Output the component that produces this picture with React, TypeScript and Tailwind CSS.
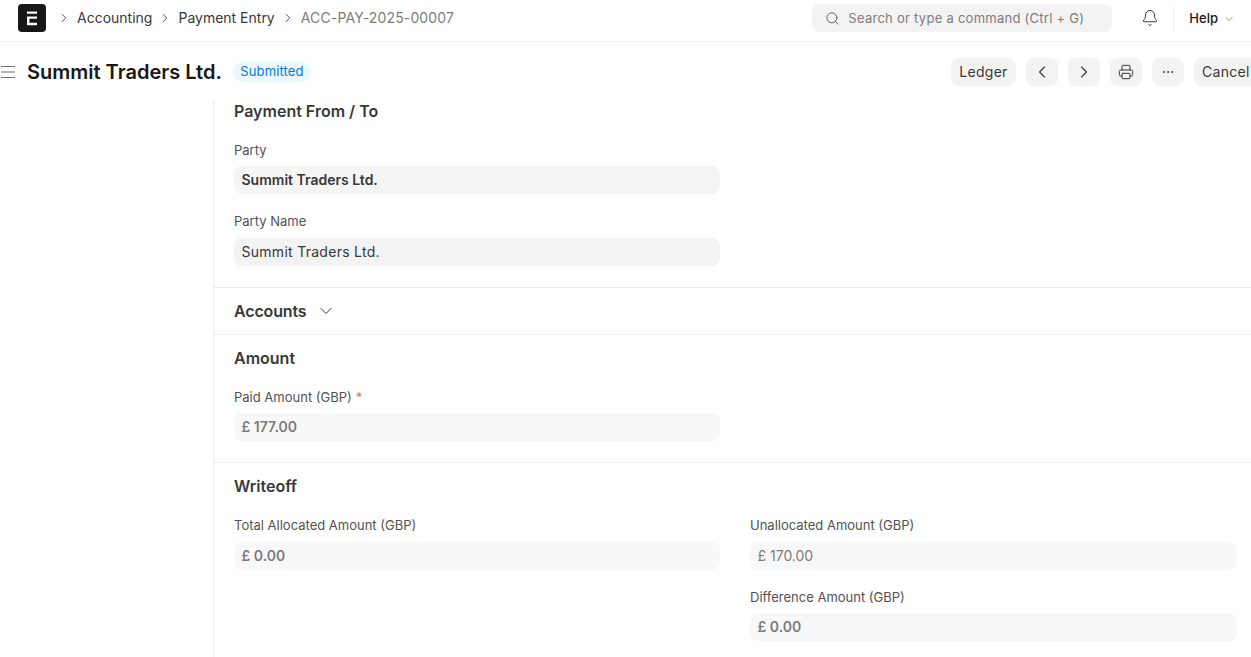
import { Bell, ChevronDown, ChevronLeft, ChevronRight, Ellipsis, Printer, Search } from "lucide-react";

const inter = "font-['Inter',sans-serif]";

function Crumb({ label, muted }: { label: string; muted?: boolean }) {
  return (
    <>
      <ChevronRight size={14} strokeWidth={1.5} className="text-[#383838]" />
      <span className={muted ? "tracking-[0.01em] text-[#7c7c7c]" : "text-[#383838]"}>{label}</span>
    </>
  );
}

function IconButton({ children }: { children: React.ReactNode }) {
  return (
    <div className="flex h-7 w-8 items-center justify-center rounded-lg bg-[#f3f3f3] text-[#383838]">
      {children}
    </div>
  );
}

function Field({
  label,
  value,
  required,
  tight,
  valueClass = "bg-[#f3f3f3] text-[#383838]",
  className = "",
}: {
  label: string;
  value: string;
  required?: boolean;
  tight?: boolean;
  valueClass?: string;
  className?: string;
}) {
  return (
    <div className={className}>
      <div className={`${tight ? "mb-[7px]" : "mb-2"} h-[18px] text-[13px] leading-[18px] text-[#525252]`}>
        {label}
        {required && <span className="ml-1 text-[#e0707a]">*</span>}
      </div>
      <div className={`flex h-7 items-center rounded-lg px-[7.5px] text-sm ${valueClass}`}>{value}</div>
    </div>
  );
}

export default function App() {
  return (
    <div className={`${inter} flex h-[657px] w-[1251px] flex-col overflow-hidden bg-white`}>
      {/* navbar */}
      <div className="flex h-[42px] shrink-0 items-center border-b border-[#ededed] pb-[5px]">
        <div className="ml-[18px] flex h-7 w-7 items-center justify-center rounded bg-[#171717]">
          <svg width="12" height="15" viewBox="0 0 12 15" fill="none" stroke="#fff" strokeWidth="2.4">
            <path d="M1 1.6h10M11 6.6H2.2V13h8.8" />
          </svg>
        </div>
        <div className="ml-[11px] flex items-center gap-[6px] text-sm">
          <Crumb label="Accounting" />
          <Crumb label="Payment Entry" />
          <Crumb label="ACC-PAY-2025-00007" muted />
        </div>
        <div className="ml-auto flex h-7 w-[300px] items-center gap-[8px] rounded-lg bg-[#f3f3f3] pl-[13px] text-[13px] tracking-[0.02em] text-[#7c7c7c]">
          <Search size={15} strokeWidth={1.4} className="text-[#525252]" />
          <span className="mt-px">Search or type a command (Ctrl + G)</span>
        </div>
        <Bell size={18} strokeWidth={1.3} className="ml-[29px] text-[#383838]" />
        <div className="ml-[14px] h-6 w-px bg-[#ededed]" />
        <div className="mt-px ml-[15px] mr-[16px] flex items-center gap-[5px] text-[13px] font-medium text-[#171717]">
          Help
          <ChevronDown size={12} strokeWidth={1.2} className="text-[#525252]" />
        </div>
      </div>

      {/* page head */}
      <div className="flex h-[59px] shrink-0 items-center">
        <svg width="16" height="16" viewBox="0 0 16 16" fill="none" stroke="#6b6b6b" strokeWidth="1" className="ml-px">
          <path d="M0 2.5h14M0 8h14M0 13.5h14" />
        </svg>
        <h1 className="ml-[10px] text-xl font-semibold text-[#171717]">Summit Traders Ltd.</h1>
        <span className="ml-[11px] flex h-5 items-center rounded-full bg-[#edf6fd] px-[7.5px] text-[13px] tracking-[0.01em] text-[#007be0]">
          Submitted
        </span>
        <div className="ml-auto flex items-center gap-[10px]">
          <div className="flex h-7 w-[65px] items-center justify-center rounded-lg bg-[#f3f3f3] text-sm tracking-[0.02em] text-[#383838]">
            Ledger
          </div>
          <IconButton>
            <ChevronLeft size={20} strokeWidth={1.3} />
          </IconButton>
          <IconButton>
            <ChevronRight size={20} strokeWidth={1.3} />
          </IconButton>
          <IconButton>
            <Printer size={16} strokeWidth={1.5} />
          </IconButton>
          <IconButton>
            <Ellipsis size={14} strokeWidth={1.5} />
          </IconButton>
          <div className="h-7 w-[57px] overflow-hidden rounded-l-lg bg-[#f3f3f3] pl-2 text-sm leading-7 tracking-[0.02em] whitespace-nowrap text-[#383838]">
            Cancel
          </div>
        </div>
      </div>

      {/* form */}
      <div className="ml-[213px] flex-1 border-l border-[#ededed]">
        <section className="h-[187px] border-b border-[#ededed] pl-5">
          <h2 className="h-5 text-base leading-5 font-semibold text-[#383838]">Payment From / To</h2>
          <div className="mt-[20px] w-[486px] space-y-[18px]">
            <Field label="Party" value="Summit Traders Ltd." tight valueClass="bg-[#f5f5f5] font-semibold text-[#383838]" />
            <Field label="Party Name" value="Summit Traders Ltd." valueClass="bg-[#f3f3f3] tracking-[0.02em] text-[#383838]" />
          </div>
        </section>

        <section className="flex h-[47px] items-center gap-[10px] border-b border-[#ededed] pl-5">
          <h2 className="text-base font-semibold tracking-[-0.01em] text-[#383838]">Accounts</h2>
          <ChevronDown size={20} strokeWidth={1.2} className="text-[#383838]" />
        </section>

        <section className="h-[128px] border-b border-[#ededed] pt-[13px] pl-5">
          <h2 className="h-5 text-base leading-5 font-semibold text-[#383838]">Amount</h2>
          <Field
            label="Paid Amount (GBP)"
            value="£ 177.00"
            required
            tight
            valueClass="bg-[#f8f8f8] font-semibold text-[#7c7c7c]"
            className="mt-[20px] w-[486px]"
          />
        </section>

        <section className="pt-[13px] pl-5">
          <h2 className="h-5 text-base leading-5 font-semibold text-[#383838]">Writeoff</h2>
          <div className="mt-[20px] grid grid-cols-[486px_487px] gap-x-[30px]">
            <Field label="Total Allocated Amount (GBP)" value="£ 0.00" valueClass="bg-[#f8f8f8] font-semibold text-[#7c7c7c]" />
            <div className="space-y-[18px]">
              <Field label="Unallocated Amount (GBP)" value="£ 170.00" valueClass="bg-[#f8f8f8] text-[#7c7c7c]" />
              <Field label="Difference Amount (GBP)" value="£ 0.00" tight valueClass="bg-[#f8f8f8] font-semibold text-[#7c7c7c]" />
            </div>
          </div>
        </section>
      </div>
    </div>
  );
}
